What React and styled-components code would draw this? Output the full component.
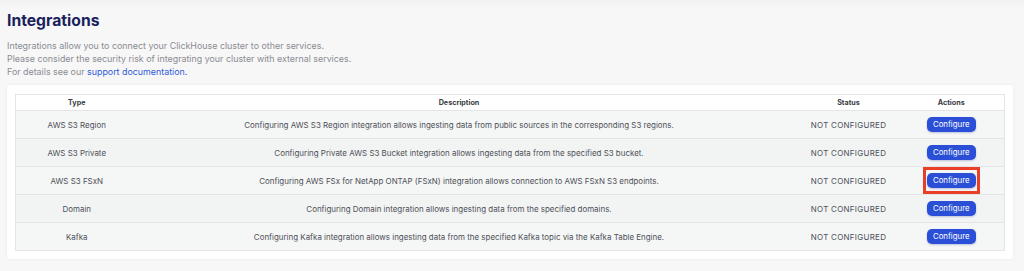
import React from "react";
import styled, { createGlobalStyle } from "styled-components";

const GlobalStyle = createGlobalStyle`
  html, body {
    margin: 0;
    padding: 0;
    background: #f7f7f8;
    font-family: Inter, "Noto Sans", sans-serif;
  }
`;

const integrations = [
  {
    type: "AWS S3 Region",
    description:
      "Configuring AWS S3 Region integration allows ingesting data from public sources in the corresponding S3 regions.",
  },
  {
    type: "AWS S3 Private",
    description:
      "Configuring Private AWS S3 Bucket integration allows ingesting data from the specified S3 bucket.",
  },
  {
    type: "AWS S3 FSxN",
    description:
      "Configuring AWS FSx for NetApp ONTAP (FSxN) integration allows connection to AWS FSxN S3 endpoints.",
    highlighted: true,
  },
  {
    type: "Domain",
    description: "Configuring Domain integration allows ingesting data from the specified domains.",
  },
  {
    type: "Kafka",
    description:
      "Configuring Kafka integration allows ingesting data from the specified Kafka topic via the Kafka Table Engine.",
  },
];

const App = () => {
  return (
    <Page>
      <GlobalStyle />
      <Title>Integrations</Title>
      <Intro>
        <p>Integrations allow you to connect your ClickHouse cluster to other services.</p>
        <p>Please consider the security risk of integrating your cluster with external services.</p>
        <p>
          For details see our <Link href="#">support documentation.</Link>
        </p>
      </Intro>

      <Card>
        <Table>
          <colgroup>
            <col style={{ width: 122 }} />
            <col />
            <col style={{ width: 100 }} />
            <col style={{ width: 106 }} />
          </colgroup>
          <thead>
            <tr>
              <Th>Type</Th>
              <Th $shift>Description</Th>
              <Th>Status</Th>
              <Th>Actions</Th>
            </tr>
          </thead>
          <tbody>
            {integrations.map((item, i) => (
              <Row key={i}>
                <Td>{item.type}</Td>
                <Td $shift>{item.description}</Td>
                <Td $caps>NOT CONFIGURED</Td>
                <Td>
                  {item.highlighted ? (
                    <Frame>
                      <ConfigureBtn>Configure</ConfigureBtn>
                    </Frame>
                  ) : (
                    <ConfigureBtn>Configure</ConfigureBtn>
                  )}
                </Td>
              </Row>
            ))}
          </tbody>
        </Table>
      </Card>
    </Page>
  );
};

const Page = styled.div`
  padding: 11px 11px 13px 7px;
  background: linear-gradient(#f1f1f2, #f7f7f8 8px);
`;

const Title = styled.h1`
  margin: 0;
  font-size: 15.7px;
  line-height: 20px;
  font-weight: 700;
  color: #1b1f5c;
`;

const Intro = styled.div`
  margin-top: 8px;
  font-size: 8.9px;
  line-height: 13px;
  color: #8a8c92;

  p {
    margin: 0;
  }
`;

const Link = styled.a`
  color: #2f5bd8;
  text-decoration: none;
`;

const Card = styled.div`
  margin-top: 7px;
  background: #ffffff;
  border-radius: 3px;
  padding: 9px 8px 8px;
  box-shadow: 0 0 4px rgba(0, 0, 0, 0.06);
`;

const Table = styled.table`
  width: 100%;
  border-collapse: collapse;
  table-layout: fixed;
  border: 1px solid #e3e5e6;
`;

const Th = styled.th`
  height: 15px;
  padding: 0 ${(p) => (p.$shift ? "18px" : "0")} 0 0;
  font-size: 7.2px;
  font-weight: 700;
  color: #3a3c42;
  text-align: center;
  background: #ffffff;
  border-bottom: 1px solid #e3e5e6;
`;

const Row = styled.tr`
  background: #f5f6f6;

  &:nth-child(even) {
    background: #f2f4f4;
  }
`;

const Td = styled.td`
  height: 27px;
  padding: 0 ${(p) => (p.$shift ? "18px" : "0")} 0 0;
  font-size: 7.95px;
  letter-spacing: ${(p) => (p.$caps ? "0.3px" : "0")};
  color: #4d5057;
  text-align: center;
  border-bottom: 1px solid #e3e5e6;
  white-space: nowrap;
`;

const ConfigureBtn = styled.button`
  display: inline-block;
  width: 49px;
  height: 15px;
  padding: 0;
  border: none;
  border-radius: 5px;
  background: #2a4fd6;
  color: #ffffff;
  font-family: inherit;
  font-size: 7.8px;
  line-height: 15px;
  vertical-align: middle;
  box-shadow: 0 1px 2px rgba(20, 40, 140, 0.25);
`;

const Frame = styled.span`
  display: inline-block;
  padding: 3px 1px;
  border: 3px solid #ea3f26;
  line-height: 0;
  vertical-align: middle;
`;

export default App;
